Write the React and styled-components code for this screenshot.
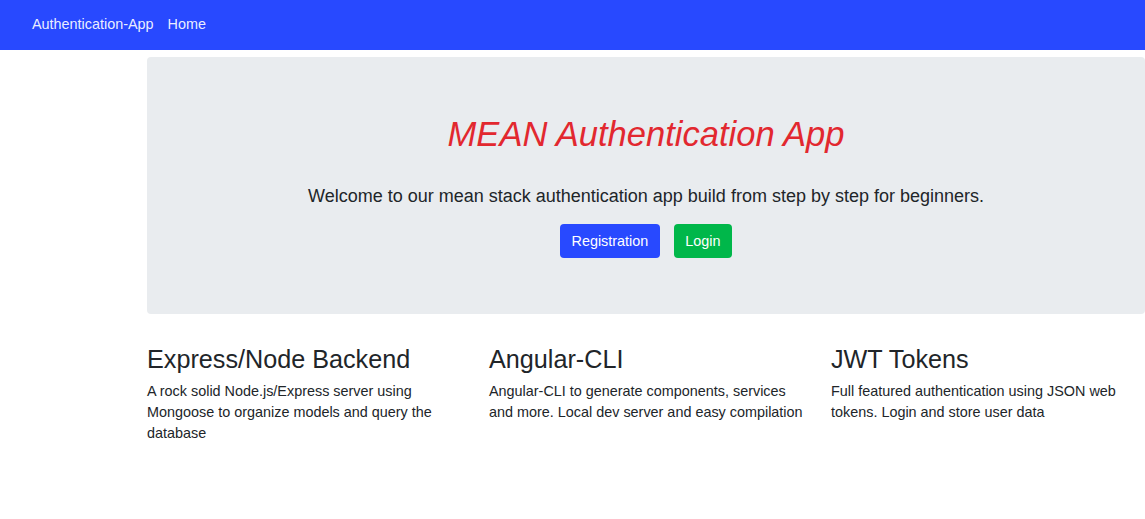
import React from "react";
import styled, { createGlobalStyle } from "styled-components";

const Global = createGlobalStyle`
  html { font-size: 14.4px; }
  html, body { margin: 0; padding: 0; background: #fff; }
  body {
    font-family: "Liberation Sans", Arial, Helvetica, sans-serif;
    color: #212529;
    overflow: hidden;
  }
  * { box-sizing: border-box; }
`;

const NavBar = styled.nav`
  height: 50px;
  background: #2849ff;
  display: flex;
  align-items: center;
  gap: 14px;
  padding: 0 0 2px 32px;
`;

const NavLink = styled.a`
  color: rgba(255, 255, 255, 0.92);
  font-size: 14.4px;
  text-decoration: none;
`;

const Main = styled.main`
  padding: 7px 0 0 147px;
`;

const Jumbotron = styled.section`
  width: 998px;
  height: 257px;
  background: #e9ecef;
  border-radius: 4px;
  display: flex;
  flex-direction: column;
  align-items: center;
  padding-top: 57px;
`;

const Title = styled.h1`
  margin: 0;
  font-size: 34.56px;
  font-weight: 400;
  font-style: italic;
  color: #e2282f;
  line-height: 1.2;
`;

const Lead = styled.p`
  margin: 28px 0 0;
  font-size: 18px;
  line-height: 1.5;
`;

const Actions = styled.div`
  display: flex;
  gap: 14px;
  margin-top: 14px;
`;

const Button = styled.a`
  display: inline-flex;
  align-items: center;
  height: 34px;
  padding: 0 11.5px;
  border-radius: 4px;
  font-size: 14.4px;
  color: #fff;
  text-decoration: none;
  background: ${(p) => (p.$variant === "success" ? "#00b74a" : "#2849ff")};
`;

const Features = styled.div`
  display: grid;
  grid-template-columns: repeat(3, 342px);
  margin-top: 30px;
`;

const Feature = styled.div`
  padding-right: 20px;
`;

const FeatureTitle = styled.h3`
  margin: 0 0 7px;
  font-size: 25.2px;
  font-weight: 400;
  line-height: 1.2;
`;

const FeatureText = styled.p`
  margin: 0;
  font-size: 14.4px;
  line-height: 21px;
`;

const features = [
  {
    title: "Express/Node Backend",
    text: "A rock solid Node.js/Express server using Mongoose to organize models and query the database",
  },
  {
    title: "Angular-CLI",
    text: "Angular-CLI to generate components, services and more. Local dev server and easy compilation",
  },
  {
    title: "JWT Tokens",
    text: "Full featured authentication using JSON web tokens. Login and store user data",
  },
];

export default function App() {
  return (
    <>
      <Global />
      <NavBar>
        <NavLink href="#">Authentication-App</NavLink>
        <NavLink href="#">Home</NavLink>
      </NavBar>
      <Main>
        <Jumbotron>
          <Title>MEAN Authentication App</Title>
          <Lead>Welcome to our mean stack authentication app build from step by step for beginners.</Lead>
          <Actions>
            <Button href="#">Registration</Button>
            <Button href="#" $variant="success">Login</Button>
          </Actions>
        </Jumbotron>
        <Features>
          {features.map((f) => (
            <Feature key={f.title}>
              <FeatureTitle>{f.title}</FeatureTitle>
              <FeatureText>{f.text}</FeatureText>
            </Feature>
          ))}
        </Features>
      </Main>
    </>
  );
}
